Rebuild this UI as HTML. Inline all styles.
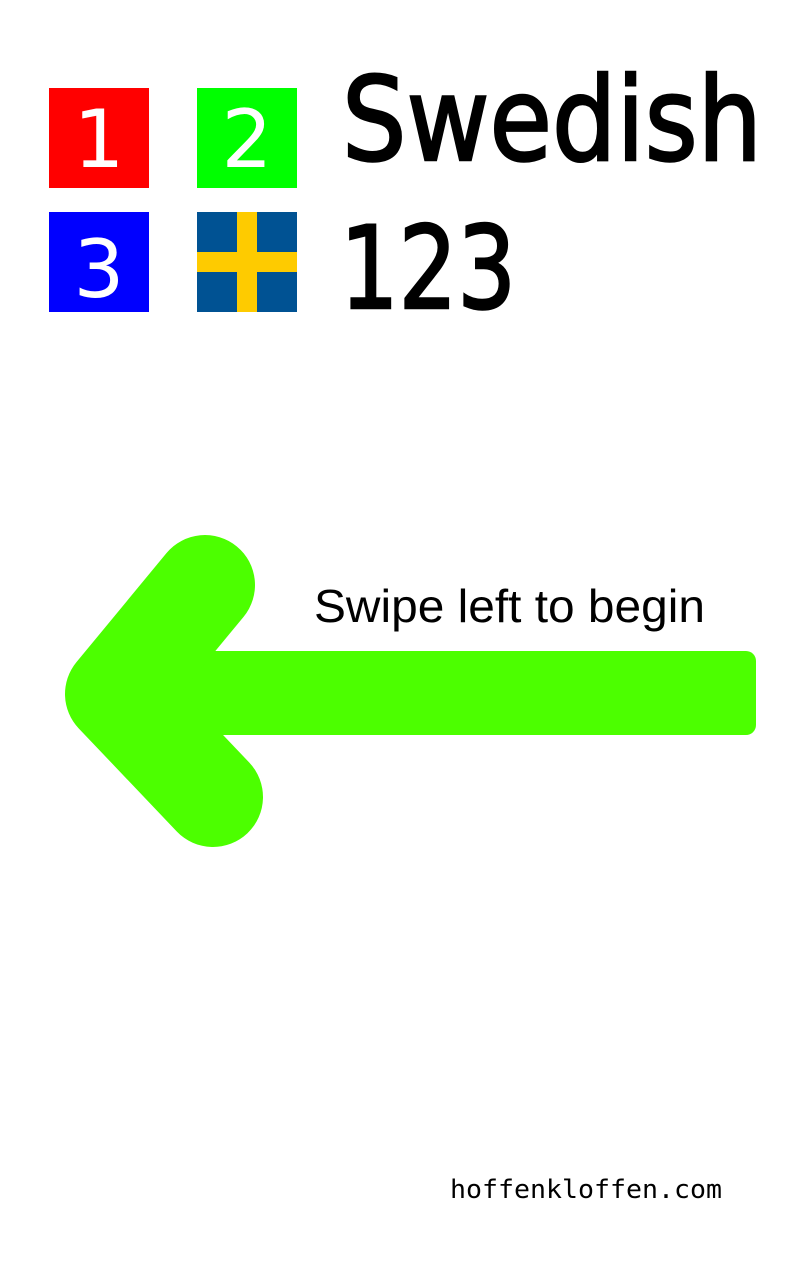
<!DOCTYPE html>
<html><head><meta charset="utf-8"><style>
html,body{margin:0;padding:0;background:#fff;width:800px;height:1280px;overflow:hidden}
</style></head><body>
<svg width="800" height="1280" viewBox="0 0 800 1280" xmlns="http://www.w3.org/2000/svg">
<rect x="49" y="88" width="100" height="100" fill="#ff0000"/>
<rect x="197" y="88" width="100" height="100" fill="#00ff00"/>
<rect x="49" y="212" width="100" height="100" fill="#0000ff"/>
<rect x="197" y="212" width="100" height="100" fill="#005293"/>
<rect x="237" y="212" width="20" height="100" fill="#fecb00"/>
<rect x="197" y="252" width="100" height="20" fill="#fecb00"/>
<g font-family="DejaVu Sans, sans-serif" fill="#fff" font-size="80" text-anchor="middle">
<text x="99" y="167">1</text>
<text x="247" y="167">2</text>
<text x="99" y="297">3</text>
</g>
<text x="342" y="160" font-family="DejaVu Sans, sans-serif" font-size="116" stroke="#000" stroke-width="2.5" textLength="420" lengthAdjust="spacingAndGlyphs">Swedish</text>
<text x="340" y="308" font-family="DejaVu Sans, sans-serif" font-size="114" stroke="#000" stroke-width="2.5" textLength="176" lengthAdjust="spacingAndGlyphs">123</text>
<text x="314" y="622" font-family="Liberation Sans, sans-serif" font-size="46" textLength="391" lengthAdjust="spacingAndGlyphs">Swipe left to begin</text>
<rect x="140" y="651" width="616" height="84" rx="10" fill="#4cff00"/>
<polyline points="205,585 115,694 213,797" fill="none" stroke="#4cff00" stroke-width="100" stroke-linecap="round" stroke-linejoin="round"/>
<text x="450" y="1198" font-family="DejaVu Sans Mono, monospace" font-size="26" textLength="272" lengthAdjust="spacingAndGlyphs">hoffenkloffen.com</text>
</svg>
</body></html>
